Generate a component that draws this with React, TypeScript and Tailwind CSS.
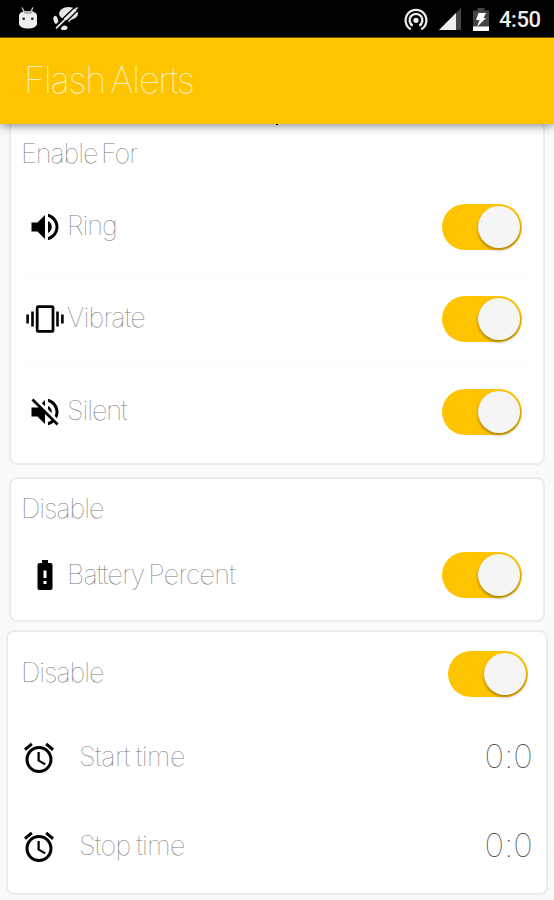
import React from 'react';
import { MdAccessAlarm, MdBatteryAlert, MdVolumeOff, MdVolumeUp } from 'react-icons/md';

const Toggle: React.FC = () => (
  <div className="flex h-[46px] w-20 shrink-0 items-center justify-end rounded-full bg-[#ffc400] pr-[2px]">
    <div className="h-[42px] w-[42px] rounded-full bg-[#f5f5f5] shadow-[0_2px_3px_rgba(90,60,0,0.5)]" />
  </div>
);

const VibrateIcon: React.FC = () => (
  <svg width="38" height="36" viewBox="0 0 38 36" fill="none" stroke="#000">
    <path d="M1.6 13.5v9M36.4 13.5v9" strokeWidth="2.6" />
    <path d="M6.5 10.5v15M31.5 10.5v15" strokeWidth="2.6" />
    <rect x="11.2" y="5.7" width="15.8" height="24.6" rx="0.8" strokeWidth="2.8" />
  </svg>
);

const AndroidIcon: React.FC = () => (
  <svg width="20" height="24" viewBox="0 0 20 24">
    <path d="M4 1.5l2 4M15 1.5l-2 4" stroke="#bbb" strokeWidth="1.5" />
    <path d="M1 10C1 7 4 5 10 5s9 2 9 5v7.500C19 20.500 15 22.500 10 22.500S1 20.500 1 17.500z" fill="#eee" />
    <path d="M5 5.300h10l-2 2.500H7z" fill="#aaa" />
    <circle cx="5.700" cy="12.800" r="1.300" fill="#222" />
    <circle cx="14.300" cy="12.800" r="1.300" fill="#222" />
  </svg>
);

const MissedIcon: React.FC = () => (
  <svg width="26" height="25" viewBox="0 0 26 25">
    <ellipse cx="15.500" cy="7.500" rx="9.500" ry="6.500" fill="#e8e8e8" />
    <path d="M11 12l5 4 5-5z" fill="#ddd" />
    <ellipse cx="2.800" cy="14" rx="2.200" ry="4.200" fill="#e8e8e8" transform="rotate(-15 2.800 14)" />
    <ellipse cx="11" cy="21.800" rx="3.500" ry="2.300" fill="#e8e8e8" />
    <path d="M1 21L23 0M5 24L26 3" stroke="#000" strokeWidth="1.300" />
    <path d="M3 22.300L24.500 1.500" stroke="#eee" strokeWidth="1.700" />
  </svg>
);

const HotspotIcon: React.FC = () => (
  <svg width="24" height="24" viewBox="0 0 24 24" fill="none" stroke="#eee" strokeWidth="2.300">
    <path d="M6.800 21.300a10.400 10.400 0 1 1 10.400 0" />
    <path d="M8.700 17.700a6.400 6.400 0 1 1 6.600 0" />
    <circle cx="12" cy="12.300" r="2.600" fill="#eee" stroke="none" />
  </svg>
);

const SignalIcon: React.FC = () => (
  <svg width="23" height="23" viewBox="0 0 23 23">
    <path d="M0 22L22 0v22z" fill="#444" />
    <path d="M0 22L17 5v17z" fill="#eee" />
  </svg>
);

const ChargingIcon: React.FC = () => (
  <svg width="16" height="23" viewBox="0 0 16 23">
    <path d="M0 2.500h4.500V0h7v2.500H16V23H0z" fill="#444" />
    <path d="M0 18.500h16V23H0z" fill="#fff" />
    <path d="M5.500 5H13l-2.500 5H13L4 19l2.500-7H3z" fill="#fff" />
  </svg>
);

const StatusBar: React.FC = () => (
  <div className="flex h-[37px] shrink-0 items-start bg-black pl-[18px]">
    <div className="flex gap-[15px] pt-[6px]">
      <AndroidIcon />
      <MissedIcon />
    </div>
    <div className="ml-auto flex items-start pt-2 pr-3">
      <HotspotIcon />
      <div className="ml-[11px]"><SignalIcon /></div>
      <div className="ml-[11px]"><ChargingIcon /></div>
      <span className="ml-[10px] w-[43px] whitespace-nowrap font-[Roboto,sans-serif] text-[22px] leading-6 font-medium tracking-[-0.4px] text-[#eee]">4:50</span>
    </div>
  </div>
);

const sources = [
  { name: 'Ring', icon: <MdVolumeUp size={36} />, tracking: 'tracking-[-1.1px]' },
  { name: 'Vibrate', icon: <VibrateIcon />, tracking: 'tracking-[-0.8px]' },
  { name: 'Silent', icon: <MdVolumeOff size={36} />, tracking: 'tracking-[-1.1px]' },
];

const times = [
  { name: 'Start time', value: '0:0', tracking: 'tracking-[-0.5px]' },
  { name: 'Stop time', value: '0:0', tracking: 'tracking-[-0.7px]' },
];

export default function App() {
  return (
    <div className="flex h-[900px] w-[554px] flex-col overflow-hidden bg-[#fafafa] font-[Inter,sans-serif] text-[27px] leading-8 font-thin tracking-[-1px] [word-spacing:-3px] text-[#777]">
      <StatusBar />
      <header className="relative z-10 flex h-[87px] shrink-0 items-center border-t border-[#6b5200] bg-[#ffc400] pl-[24px] shadow-[0_2px_9px_rgba(0,0,0,0.45)]">
        <h1 className="pb-[3px] text-[36px] tracking-[-1.05px] text-white/90 [word-spacing:-4px]">Flash Alerts</h1>
        <span className="absolute top-[86px] left-[276px] h-px w-[2px] bg-black" />
      </header>

      <section className="mx-[9px] -mt-1 h-[345px] shrink-0 rounded-lg border-2 border-[#ececec] bg-white pt-4 pr-[11px] pl-[10px]">
        <h2 className="tracking-[-1.05px]">Enable For</h2>
        <div className="mt-[11px]">
          {sources.map((s) => (
            <div key={s.name} className="flex h-[92.5px] items-center border-b border-[#fafafa] pr-[10px] last:border-0">
              <div className="flex w-[46px] justify-center pl-px text-black">{s.icon}</div>
              <span className={`pb-0.5 ${s.tracking}`}>{s.name}</span>
              <div className="ml-auto"><Toggle /></div>
            </div>
          ))}
        </div>
      </section>

      <section className="mx-[9px] mt-3 h-[145px] shrink-0 rounded-lg border-2 border-[#ececec] bg-white pt-[14px] pr-[11px] pl-[10px]">
        <h2>Disable</h2>
        <div className="mt-[27px] flex h-[46px] items-center pr-[10px]">
          <div className="flex w-[46px] justify-center pl-px text-black"><MdBatteryAlert size={36} /></div>
          <span className="tracking-[-0.8px]">Battery Percent</span>
          <div className="ml-auto"><Toggle /></div>
        </div>
      </section>

      <section className="mx-[6px] mt-2 h-[265px] shrink-0 rounded-lg border-2 border-[#ececec] bg-white px-[13px] pt-[19px]">
        <div className="flex h-[46px] items-center justify-between pr-[5px]">
          <h2 className="pb-0.5">Disable</h2>
          <Toggle />
        </div>
        <div className="mt-4">
          {times.map((t) => (
            <div key={t.name} className="flex h-[89px] items-center">
              <MdAccessAlarm size={36} className="text-black" />
              <span className={`ml-[22px] pb-px [word-spacing:-1px] ${t.tracking}`}>{t.name}</span>
              <span className="ml-auto pb-[3px] text-[33px] tracking-[0.2px] text-[#444]">{t.value}</span>
            </div>
          ))}
        </div>
      </section>
    </div>
  );
}
